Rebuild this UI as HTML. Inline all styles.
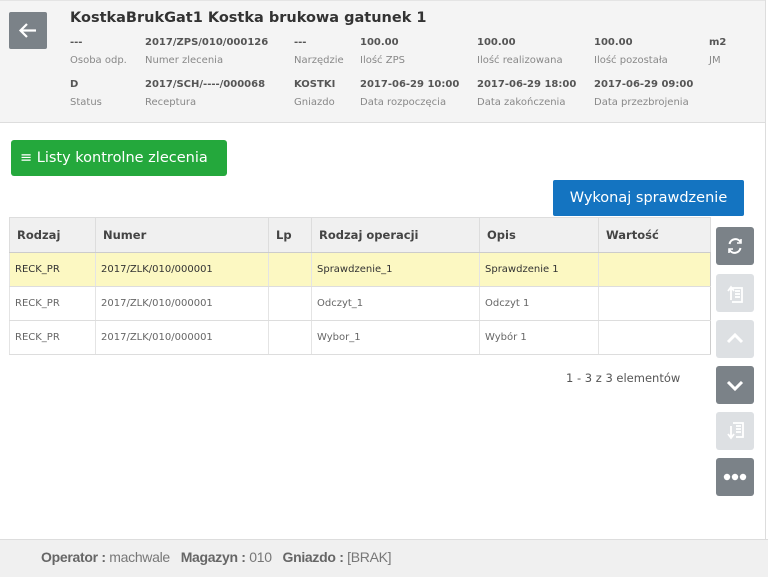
<!DOCTYPE html>
<html><head><meta charset="utf-8"><style>
*{box-sizing:border-box;margin:0;padding:0}
body{width:768px;height:577px;overflow:hidden;background:#fff;font-family:"DejaVu Sans","Liberation Sans",sans-serif;position:relative;color:#444}
.hdr{position:absolute;left:0;top:0;width:766px;height:123px;background:#f4f4f4;border-bottom:1px solid #ddd;border-top:1px solid #e4e4e4}
.back{position:absolute;left:9px;top:12px;width:38px;height:37px;background:#7b8288;border-radius:2px}
.t{position:absolute;white-space:nowrap}
.title{left:70px;top:10px;font-size:14.5px;font-weight:bold;color:#333}
.v{font-size:10px;font-weight:bold;color:#555}
.l{font-size:10px;color:#888}
.green{position:absolute;left:11px;top:140px;width:216px;height:36px;background:#24a83c;border-radius:3px;color:#fff;font-size:14.5px;line-height:36px;padding-left:9px}
.blue{position:absolute;left:553px;top:180px;width:191px;height:36px;background:#1474c1;border-radius:2px;color:#fff;font-size:14.5px;line-height:36px;text-align:center}
table{position:absolute;left:9px;top:217px;width:702px;border-collapse:collapse;border:1px solid #ccc;font-size:10px}
th{background:#f0f0f0;height:35px;text-align:left;padding-left:7px;font-size:11.5px;color:#444;border:1px solid #ddd;border-bottom:1px solid #ccc}
td{height:34px;padding-left:5px;border-left:1px solid #e4e4e4;border-bottom:1px solid #ddd;color:#666}
tr.sel td{background:#fcf8c2;color:#333}
.sb{position:absolute;left:716px;width:38px;height:38px;border-radius:3px;background:#7b8288}
.sb.d{background:#dde0e3}
.foot{position:absolute;left:0;top:539px;width:768px;height:38px;background:#f0f0f0;border-top:1px solid #ddd;font-family:"Liberation Sans",sans-serif;font-size:14px;letter-spacing:-0.3px;color:#777;padding:9px 0 0 41px}
.foot b{color:#666}
</style></head><body>
<div class="hdr"></div>
<div style="position:absolute;left:765px;top:0;width:1px;height:577px;background:#ddd"></div>
<div class="back"><svg width="38" height="37"><path d="M27 18.5H12M18 12l-6.5 6.5L18 25" stroke="#fff" stroke-width="2.2" fill="none"/></svg></div>
<div class="t title">KostkaBrukGat1 Kostka brukowa gatunek 1</div>
<div class="t v" style="left:70px;top:37px">---</div><div class="t l" style="left:70px;top:55px">Osoba odp.</div>
<div class="t v" style="left:145px;top:37px">2017/ZPS/010/000126</div><div class="t l" style="left:145px;top:55px">Numer zlecenia</div>
<div class="t v" style="left:294px;top:37px">---</div><div class="t l" style="left:294px;top:55px">Narzędzie</div>
<div class="t v" style="left:360px;top:37px">100.00</div><div class="t l" style="left:360px;top:55px">Ilość ZPS</div>
<div class="t v" style="left:477px;top:37px">100.00</div><div class="t l" style="left:477px;top:55px">Ilość realizowana</div>
<div class="t v" style="left:594px;top:37px">100.00</div><div class="t l" style="left:594px;top:55px">Ilość pozostała</div>
<div class="t v" style="left:709px;top:37px">m2</div><div class="t l" style="left:709px;top:55px">JM</div>
<div class="t v" style="left:70px;top:79px">D</div><div class="t l" style="left:70px;top:97px">Status</div>
<div class="t v" style="left:145px;top:79px">2017/SCH/----/000068</div><div class="t l" style="left:145px;top:97px">Receptura</div>
<div class="t v" style="left:294px;top:79px">KOSTKI</div><div class="t l" style="left:294px;top:97px">Gniazdo</div>
<div class="t v" style="left:360px;top:79px">2017-06-29 10:00</div><div class="t l" style="left:360px;top:97px">Data rozpoczęcia</div>
<div class="t v" style="left:477px;top:79px">2017-06-29 18:00</div><div class="t l" style="left:477px;top:97px">Data zakończenia</div>
<div class="t v" style="left:594px;top:79px">2017-06-29 09:00</div><div class="t l" style="left:594px;top:97px">Data przezbrojenia</div>
<div class="green">&#8801; Listy kontrolne zlecenia</div>
<div class="blue">Wykonaj sprawdzenie</div>
<table>
<tr><th style="width:86px">Rodzaj</th><th style="width:173px">Numer</th><th style="width:43px">Lp</th><th style="width:168px">Rodzaj operacji</th><th style="width:119px">Opis</th><th>Wartość</th></tr>
<tr class="sel"><td>RECK_PR</td><td>2017/ZLK/010/000001</td><td></td><td>Sprawdzenie_1</td><td>Sprawdzenie 1</td><td></td></tr>
<tr><td>RECK_PR</td><td>2017/ZLK/010/000001</td><td></td><td>Odczyt_1</td><td>Odczyt 1</td><td></td></tr>
<tr><td>RECK_PR</td><td>2017/ZLK/010/000001</td><td></td><td>Wybor_1</td><td>Wybór 1</td><td></td></tr>
</table>
<div class="t" style="left:566px;top:371px;font-size:11.5px;color:#555">1 - 3 z 3 elementów</div>
<div class="sb" style="top:227px"><svg width="38" height="38"><path d="M13.5 17a6 6 0 0 1 11-2M24.5 21a6 6 0 0 1-11 2" stroke="#fff" stroke-width="2" fill="none"/><path d="M25 12v4h-4M13 26v-4h4" stroke="#fff" stroke-width="1.6" fill="none"/></svg></div>
<div class="sb d" style="top:274px"><svg width="38" height="38"><path d="M16 14h10v14H16M19 17h5M19 20h5M19 23h5M12 17l3-4 3 4M15 14v12" stroke="#fff" stroke-width="1.8" fill="none"/></svg></div>
<div class="sb d" style="top:320px"><svg width="38" height="38"><path d="M12 22l7-7 7 7" stroke="#fff" stroke-width="3" fill="none"/></svg></div>
<div class="sb" style="top:366px"><svg width="38" height="38"><path d="M12 16l7 7 7-7" stroke="#fff" stroke-width="3" fill="none"/></svg></div>
<div class="sb d" style="top:412px"><svg width="38" height="38"><path d="M17 11h10v14H20M20 14h5M20 17h5M20 20h5M12 22l3 4 3-4M15 26V14" stroke="#fff" stroke-width="1.8" fill="none"/></svg></div>
<div class="sb" style="top:458px"><svg width="38" height="38"><circle cx="11" cy="19" r="3.2" fill="#fff"/><circle cx="19" cy="19" r="3.2" fill="#fff"/><circle cx="27" cy="19" r="3.2" fill="#fff"/></svg></div>
<div class="foot"><b>Operator :</b> machwale &nbsp;&nbsp;<b>Magazyn :</b> 010 &nbsp;&nbsp;<b>Gniazdo :</b> [BRAK]</div>
</body></html>
